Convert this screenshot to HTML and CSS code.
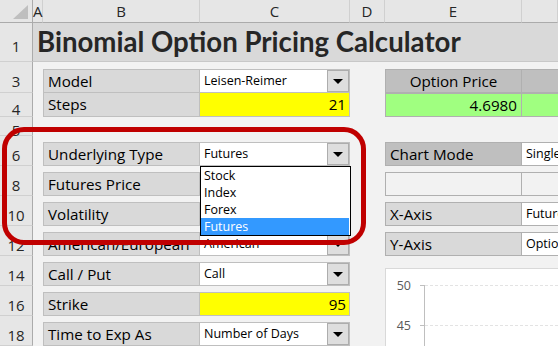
FILE: index.html
```html
<!DOCTYPE html>
<html lang="en">
<head>
    <meta charset="UTF-8">
    <title>Binomial Option Pricing Calculator</title>
    <link rel="stylesheet" href="styles.css">
</head>
<body>

    <div class="sheet">
        <!-- column headers -->
        <div class="corner">
            <svg width="32" height="22"><polygon points="28,5 28,19 13,19" fill="#bfbfbf"/></svg>
        </div>
        <div class="col">A</div>
        <div class="col">B</div>
        <div class="col">C</div>
        <div class="col">D</div>
        <div class="col">E</div>
        <div class="col"></div>

        <!-- row 1 -->
        <div class="row-no">1</div>
        <div class="title">Binomial Option Pricing Calculator</div>

        <!-- row 3 -->
        <div class="row-no">3</div>
        <div class="label">Model</div>
        <div class="value">Leisen-Reimer<span class="btn"></span></div>
        <div class="box dark center">Option Price</div>
        <div class="box-f dark"></div>

        <!-- row 4 -->
        <div class="row-no">4</div>
        <div class="label join">Steps</div>
        <div class="value input join">21</div>
        <div class="box green right join">4.6980</div>
        <div class="box-f green join"></div>

        <!-- row 5 -->
        <div class="row-no">5</div>

        <!-- row 6 -->
        <div class="row-no">6</div>
        <div class="label">Underlying Type</div>
        <div class="value">Futures<span class="btn"></span>
            <ul class="list">
                <li>Stock</li>
                <li>Index</li>
                <li>Forex</li>
                <li class="on">Futures</li>
            </ul>
        </div>
        <div class="box dark">Chart Mode</div>
        <div class="box-f">Single Line</div>

        <!-- row 8 -->
        <div class="row-no">8</div>
        <div class="label">Futures Price</div>
        <div class="value input">100</div>
        <div class="box blank"></div>
        <div class="box-f blank"></div>

        <!-- row 10 -->
        <div class="row-no">10</div>
        <div class="label">Volatility</div>
        <div class="value input">30%</div>
        <div class="box">X-Axis</div>
        <div class="box-f">Futures Price</div>

        <!-- row 12 -->
        <div class="row-no">12</div>
        <div class="label">American/European</div>
        <div class="value">American<span class="btn"></span></div>
        <div class="box">Y-Axis</div>
        <div class="box-f">Option Price</div>

        <!-- row 14 -->
        <div class="row-no">14</div>
        <div class="label">Call / Put</div>
        <div class="value">Call<span class="btn"></span></div>

        <!-- row 16 -->
        <div class="row-no">16</div>
        <div class="label">Strike</div>
        <div class="value input">95</div>

        <!-- row 18 -->
        <div class="row-no">18</div>
        <div class="label">Time to Exp As</div>
        <div class="value">Number of Days<span class="btn"></span></div>

        <!-- chart object -->
        <div class="chart">
            <svg width="173" height="78">
                <line x1="34" y1="16.5" x2="38" y2="16.5" stroke="#bfbfbf"/>
                <line x1="34" y1="56.5" x2="38" y2="56.5" stroke="#bfbfbf"/>
                <line x1="39" y1="16.5" x2="173" y2="16.5" stroke="#e3e3e3" stroke-dasharray="3 2"/>
                <line x1="39" y1="56.5" x2="173" y2="56.5" stroke="#e3e3e3" stroke-dasharray="3 2"/>
                <line x1="38.5" y1="16" x2="38.5" y2="78" stroke="#bfbfbf"/>
                <text x="25" y="21" text-anchor="end">50</text>
                <text x="25" y="61" text-anchor="end">45</text>
            </svg>
        </div>

        <div class="mark"></div>
    </div>

</body>
</html>
```

FILE: styles.css
```css
* {
    box-sizing: border-box;
}
body {
    margin: 0;
    background: #f2f2f2;
    font-family: "Open Sans", sans-serif;
    color: #000;
    overflow: hidden;
}
.sheet {
    position: relative;
    display: grid;
    grid-template-columns: 33px 10px 157px 150px 35px 137px 1fr;
    grid-template-rows: 23px 39px 31px 24px 19px repeat(7, 30px);
    width: 558px;
    height: 346px;
    overflow: hidden;
}

/* headers */
.corner {
    background: #e6e6e6;
    border-right: 1px solid #ababab;
    border-bottom: 1px solid #ababab;
}
.corner svg {
    display: block;
}
.col {
    background: #e6e6e6;
    border-right: 1px solid #d0d0d0;
    border-bottom: 1px solid #ababab;
    text-align: center;
    font-size: 15px;
    line-height: 22px;
    color: #262626;
}
.row-no {
    grid-column: 1;
    background: #e6e6e6;
    border-right: 1px solid #ababab;
    border-bottom: 1px solid #d0d0d0;
    display: flex;
    align-items: center;
    justify-content: center;
    padding-top: 8px;
    font-size: 15px;
    color: #262626;
}
.title {
    grid-column: 2 / -1;
    background: #d9d9d9;
    border-bottom: 1px solid #c8c8c8;
    padding-left: 4px;
    font-family: Lato, sans-serif;
    font-weight: 700;
    font-size: 27.6px;
    line-height: 38px;
    color: #262626;
    white-space: nowrap;
}

/* input block */
.label {
    grid-column: 3;
    align-self: end;
    height: 24px;
    border: 1px solid #bfbfbf;
    background: #d9d9d9;
    padding-left: 4px;
    font-size: 15.2px;
    line-height: 22px;
    white-space: nowrap;
    overflow: hidden;
}
.value {
    position: relative;
    align-self: end;
    height: 24px;
    display: flex;
    border: 1px solid #bfbfbf;
    border-left: 0;
    background: #fff;
    padding-left: 4px;
    font-size: 12.5px;
    line-height: 22px;
    white-space: nowrap;
}
.value.input {
    background: #ffff00;
    justify-content: flex-end;
    padding-right: 3px;
    font-size: 15.2px;
}
.join {
    border-top: 0;
    line-height: 23px;
}
.btn {
    margin-left: auto;
    width: 22px;
    border: 1px solid #adadad;
    background: #dedede;
    display: flex;
    align-items: center;
    justify-content: center;
}
.btn::after {
    content: "";
    border-left: 5px solid transparent;
    border-right: 5px solid transparent;
    border-top: 5px solid #000;
}

/* dropdown list */
.list {
    position: absolute;
    left: 0;
    top: calc(100% + 1px);
    width: 151px;
    margin: 0;
    padding: 0 1px 0 0;
    list-style: none;
    background: #fff;
    border: 1px solid #000;
    font-size: 12.5px;
    line-height: 17px;
    z-index: 2;
}
.list li {
    padding-left: 3px;
}
.list .on {
    background: #3399ff;
    color: #fff;
}

/* output block */
.box {
    grid-column: 6;
    align-self: end;
    height: 24px;
    border: 1px solid #b0b0b0;
    background: #d9d9d9;
    padding: 0 4px;
    font-size: 15.2px;
    line-height: 22px;
}
.box-f {
    align-self: end;
    height: 24px;
    border: 1px solid #b0b0b0;
    border-left: 0;
    border-right: 0;
    background: #fff;
    padding-left: 4px;
    font-size: 12.5px;
    line-height: 22px;
    white-space: nowrap;
    overflow: hidden;
}
.dark {
    background: #bfbfbf;
}
.green {
    background: #a0ff80;
}
.blank {
    background: #f2f2f2;
}
.center {
    text-align: center;
}
.right {
    text-align: right;
}

.chart {
    grid-column: 6 / 8;
    grid-row: 10 / 13;
    margin-top: 12px;
    background: #fff;
    border-top: 1px solid #d9d9d9;
    border-left: 1px solid #d9d9d9;
}
.chart svg {
    display: block;
}
.chart text {
    font-family: "Open Sans", sans-serif;
    font-size: 12.5px;
    fill: #595959;
}

/* red annotation */
.mark {
    position: absolute;
    left: 2px;
    top: 127px;
    width: 364px;
    height: 118px;
    border: 5px solid #c00000;
    border-radius: 22px;
    z-index: 3;
}
```
